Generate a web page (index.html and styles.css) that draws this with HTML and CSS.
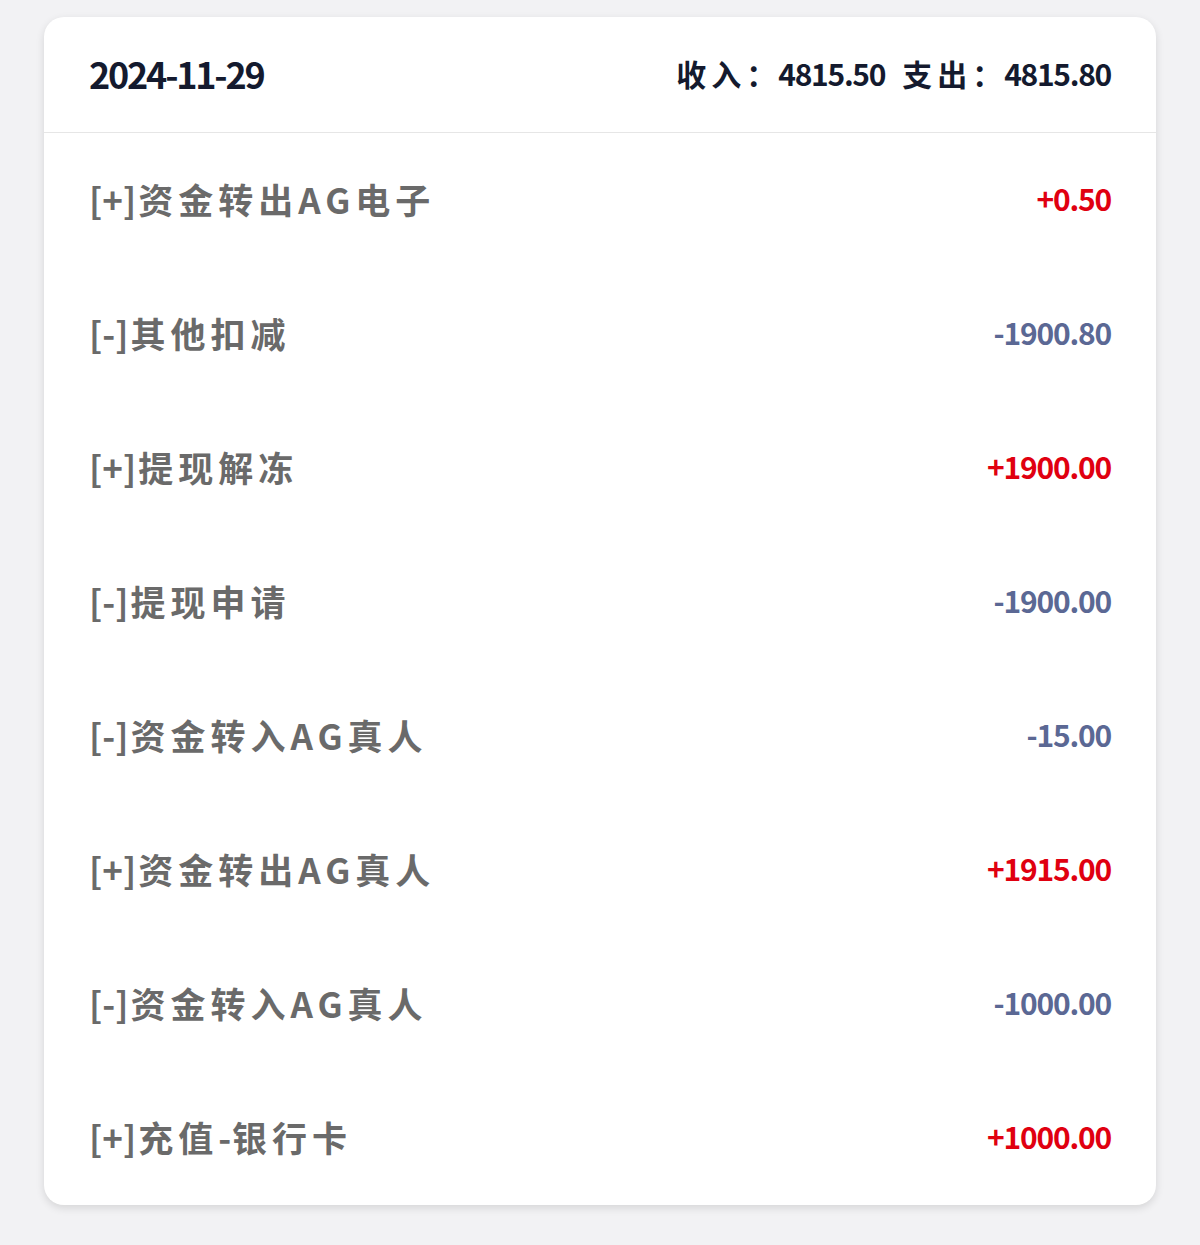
FILE: index.html
```html
<!DOCTYPE html>
<html lang="zh-CN">
<head>
<meta charset="utf-8">
<link rel="stylesheet" href="styles.css">
</head>
<body>
<div class="card">
  <div class="head">
    <div class="date">2024-11-29</div>
    <div class="sum"><span class="k">收入：</span><span class="v">4815.50</span><span class="k k2">支出：</span><span class="v">4815.80</span></div>
  </div>
  <div class="row"><div class="label"><span class="tag">[+]</span>资金转出AG电子</div><div class="amt plus">+0.50</div></div>
  <div class="row"><div class="label"><span class="tag">[-]</span>其他扣减</div><div class="amt minus">-1900.80</div></div>
  <div class="row"><div class="label"><span class="tag">[+]</span>提现解冻</div><div class="amt plus">+1900.00</div></div>
  <div class="row"><div class="label"><span class="tag">[-]</span>提现申请</div><div class="amt minus">-1900.00</div></div>
  <div class="row"><div class="label"><span class="tag">[-]</span>资金转入AG真人</div><div class="amt minus">-15.00</div></div>
  <div class="row"><div class="label"><span class="tag">[+]</span>资金转出AG真人</div><div class="amt plus">+1915.00</div></div>
  <div class="row"><div class="label"><span class="tag">[-]</span>资金转入AG真人</div><div class="amt minus">-1000.00</div></div>
  <div class="row"><div class="label"><span class="tag">[+]</span>充值<span class="dash">-</span>银行卡</div><div class="amt plus">+1000.00</div></div>
</div>
</body>
</html>
```
FILE: styles.css
```css
html, body {
  margin: 0;
  padding: 0;
  background: #f2f2f4;
}
body {
  padding: 17px 44px 39px;
  font-family: "Noto Sans CJK SC", "Noto Sans", sans-serif;
}
.card {
  background: #fff;
  border-radius: 20px;
  box-shadow: 0 3px 8px rgba(0, 0, 0, 0.12);
  overflow: hidden;
}
.head {
  height: 116px;
  box-sizing: border-box;
  border-bottom: 1px solid #e6e6e6;
  padding: 0 45px 4px;
  display: flex;
  align-items: center;
  justify-content: space-between;
}
.date {
  font-size: 36px;
  font-weight: 700;
  color: #141a2e;
  letter-spacing: -2.2px;
}
.sum {
  font-size: 30px;
  font-weight: 700;
  color: #141a2e;
  display: flex;
  align-items: center;
}
.sum .k { letter-spacing: 5px; margin-right: -3px; }
.sum .v { letter-spacing: -1.3px; }
.sum .k2 { margin-left: 17px; }
.row {
  height: 134px;
  box-sizing: border-box;
  padding: 0 45px 4px;
  display: flex;
  align-items: center;
  justify-content: space-between;
}
.label {
  font-size: 35px;
  font-weight: 700;
  color: #6a6a6a;
  letter-spacing: 5px;
}
.tag {
  letter-spacing: 0;
  margin-right: 2px;
}
.dash {
  letter-spacing: 1px;
}
.amt {
  font-size: 30px;
  font-weight: 700;
  letter-spacing: -1.2px;
}
.plus { color: #e00010; }
.minus { color: #5b6894; }
```
